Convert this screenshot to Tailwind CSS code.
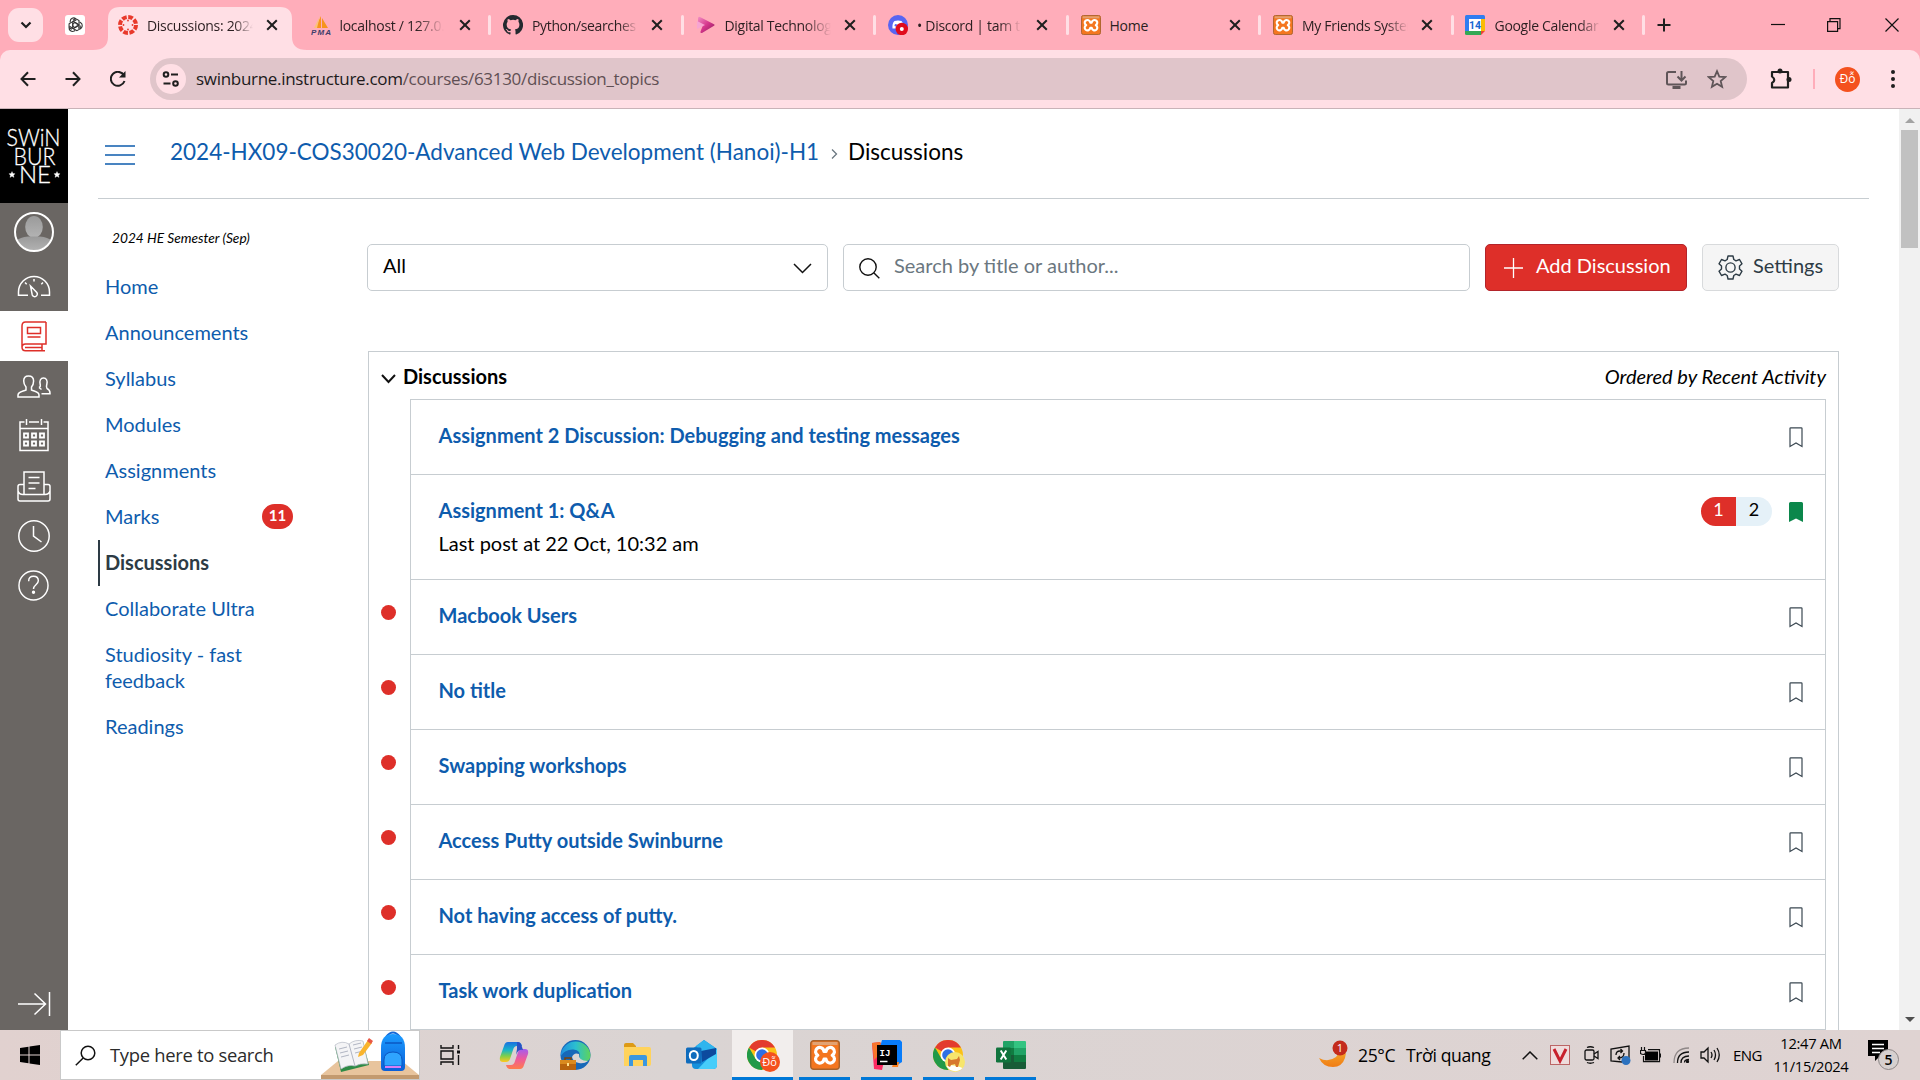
<!DOCTYPE html>
<html lang="en">
<head>
<meta charset="utf-8">
<title>Discussions</title>
<script src="https://cdn.jsdelivr.net/npm/@tailwindcss/browser@4"></script>
</head>
<body class="h-[1080px] w-[1920px] overflow-hidden bg-white font-['Lato',sans-serif] text-black">
<svg class="absolute h-0 w-0">
  <defs>
    <linearGradient id="g-cop1" x1="0" y1="0" x2="0" y2="1"><stop offset="0" stop-color="#1b6fe0"/><stop offset=".4" stop-color="#18b5c9"/><stop offset=".7" stop-color="#7fcf4a"/><stop offset="1" stop-color="#ffc81e"/></linearGradient>
    <linearGradient id="g-cop2" x1="0" y1="0" x2="0" y2="1"><stop offset="0" stop-color="#a45cf0"/><stop offset=".5" stop-color="#ee5a9c"/><stop offset="1" stop-color="#ff7d4a"/></linearGradient>
    <linearGradient id="g-edge" x1="0" y1="0" x2="1" y2="0"><stop offset="0" stop-color="#1f8fe0"/><stop offset=".5" stop-color="#2bbfd0"/><stop offset="1" stop-color="#5ed45a"/></linearGradient>
    <linearGradient id="g-moon" x1="0" y1="0" x2="0" y2="1"><stop offset="0" stop-color="#f7b733"/><stop offset="1" stop-color="#f07c14"/></linearGradient>
    <linearGradient id="g-bag" x1="0" y1="0" x2="0" y2="1"><stop offset="0" stop-color="#1b9bff"/><stop offset="1" stop-color="#0a5fd8"/></linearGradient>
    <linearGradient id="g-head" x1="0" y1="0" x2="0" y2="1"><stop offset="0" stop-color="#9a9a9a"/><stop offset="1" stop-color="#b4b4b4"/></linearGradient>
    <linearGradient id="g-stream" x1="0" y1="0" x2="1" y2="1"><stop offset="0" stop-color="#f28fc4"/><stop offset=".5" stop-color="#d6368c"/><stop offset="1" stop-color="#8b1a5c"/></linearGradient>
  </defs>
  <symbol id="x" viewBox="0 0 12 12"><path d="M1.2 1.2 10.8 10.8M10.8 1.2 1.2 10.8" stroke="#1f1f1f" stroke-width="2" fill="none"/></symbol>
  <symbol id="xampp" viewBox="0 0 30 30"><rect x=".7" y=".7" width="28.6" height="28.6" rx="3" fill="#f4761f" stroke="#a8622b" stroke-width="1.4"/><path d="M2.500 2h25v3h-25z" fill="#e2a272"/><path d="M7 8.500C9.500 6.500 13.500 7.500 14 11.500h2C16.500 7.500 20.500 6.500 23 8.500c2.300 2 1.800 5-.8 6.800 2.600 1.800 3.100 4.800.8 6.800-2.500 2-6.500 1-7-3h-2c-.5 4-4.500 5-7 3-2.300-2-1.800-5 .8-6.800C5.200 13.500 4.700 10.500 7 8.500z" fill="none" stroke="#fff" stroke-width="3.200" stroke-linejoin="round"/></symbol>
  <symbol id="bm" viewBox="0 0 14 21"><path d="M1 1.500Q1 .8 1.700 .8H12.300Q13 .8 13 1.500V19.400L7 16 1 19.400Z" fill="none" stroke="#3b4852" stroke-width="1.200"/></symbol>
  <symbol id="chrome" viewBox="0 0 30 30"><circle cx="15" cy="15" r="15" fill="#fbc116"/><path d="M15 15 2 7.500A15 15 0 0 1 28 7.500H15z" fill="#e33b2e"/><path d="M2 7.500A15 15 0 0 0 15 30L21.500 18.700 15 15 8.500 18.700z" fill="#219a48"/><circle cx="15" cy="15" r="7.500" fill="#fff"/><circle cx="15" cy="15" r="5.800" fill="#2f6fe4"/></symbol>
</svg>

<div class="flex h-full flex-col">
  <!-- Tab strip -->
  <header class="flex h-[50px] shrink-0 bg-[#ffadba] font-['Open_Sans',sans-serif] text-[14px] text-[#2b1f21]">
    <div class="flex w-[103px] shrink-0 items-start pl-2 pt-2">
      <div class="flex h-[34px] w-[35px] items-center justify-center rounded-[11px] bg-[#ffdfe5]"><svg class="h-[8px] w-[12px]" viewBox="0 0 12 8"><path d="M1.500 1.500 6 6 10.500 1.500" fill="none" stroke="#1f1f1f" stroke-width="2.200"/></svg></div>
      <svg class="ml-[22px] mt-[7px] h-5 w-5" viewBox="0 0 20 20"><rect width="20" height="20" rx="3" fill="#fff"/><g fill="none" stroke="#333" stroke-width="1.100"><path id="p" d="M5.200 7.500V6.200C5.300 3.500 8.500 2 10.800 3.600L14 5.500v4.800L10 12.600 7.800 11.300V6.800l3.600-2M10.800 3.600 7.800 5.200"/><use href="#p" transform="rotate(120 10 10)"/><use href="#p" transform="rotate(240 10 10)"/></g></svg>
    </div>
    <div class="relative w-[192.5px] shrink-0">
      <svg class="absolute top-[7px] -left-[10px] h-[43px] w-[214px]" viewBox="0 0 214 43"><path d="M0 43Q15 43 15 30V12Q15 0 27 0H187Q199 0 199 12V30Q199 43 214 43Z" fill="#ffdfe5"/></svg>
      <div class="relative flex h-[50px] items-center pl-[15px]">
        <svg class="h-5 w-5" viewBox="0 0 20 20"><circle cx="10" cy="10" r="8" fill="none" stroke="#e8392b" stroke-width="4" stroke-dasharray="4.700 1.583"/><g fill="#e8392b"><circle cx="10" cy="5.500" r=".9"/><circle cx="10" cy="14.500" r=".9"/><circle cx="5.500" cy="10" r=".9"/><circle cx="14.500" cy="10" r=".9"/></g></svg>
        <span class="ml-[9px] w-[106px] overflow-hidden whitespace-nowrap tracking-[-0.3px] [mask-image:linear-gradient(to_right,black_82%,transparent)]">Discussions: 2024</span>
        <svg class="ml-[13px] h-3 w-3"><use href="#x"/></svg>
      </div>
    </div>
    <div class="flex w-[192.5px] shrink-0 items-center pl-[15px]">
      <svg class="h-5 w-5" viewBox="0 0 20 20"><path d="M10 1 4 13h6zM11 3l6 10h-6z" fill="#f7941d"/><path d="M9 1 6 13H3z" fill="#fbc27a"/><text x="0" y="19.500" font-family="Liberation Sans" font-weight="bold" font-style="italic" font-size="8" textLength="20" fill="#41406b">PMA</text></svg>
      <span class="ml-[9px] w-[106px] overflow-hidden whitespace-nowrap tracking-[-0.3px] [mask-image:linear-gradient(to_right,black_72%,transparent_98%)]">localhost / 127.0.0.1</span>
      <svg class="ml-[13px] h-3 w-3"><use href="#x"/></svg>
    </div>
    <div class="flex w-[192.5px] shrink-0 items-center"><i class="h-5 w-[3px] rounded bg-[#ffdfe5]"></i>
      <svg class="ml-[12px] h-5 w-5" viewBox="0 0 16 16"><path fill="#24292f" d="M8 0a8 8 0 0 0-2.530 15.590c.4.070.550-.170.550-.380v-1.490c-2.010.370-2.530-.490-2.690-.940-.090-.230-.480-.940-.820-1.130-.280-.150-.680-.520-.010-.530.630-.010 1.080.580 1.230.820.720 1.210 1.870.870 2.330.660.070-.520.280-.870.510-1.070-1.780-.2-3.640-.890-3.640-3.950 0-.870.310-1.590.820-2.150-.080-.2-.360-1.020.080-2.120 0 0 .670-.210 2.200.820a7.400 7.400 0 0 1 4 0c1.530-1.040 2.200-.820 2.200-.820.440 1.100.160 1.920.080 2.120.510.560.820 1.270.820 2.150 0 3.070-1.870 3.750-3.650 3.950.290.250.540.730.540 1.480v2.200c0 .210.150.460.550.380A8 8 0 0 0 8 0"/></svg>
      <span class="ml-[9px] w-[106px] overflow-hidden whitespace-nowrap tracking-[-0.35px] [mask-image:linear-gradient(to_right,black_82%,transparent)]">Python/searches</span>
      <svg class="ml-[13px] h-3 w-3"><use href="#x"/></svg>
    </div>
    <div class="flex w-[192.5px] shrink-0 items-center"><i class="h-5 w-[3px] rounded bg-[#ffdfe5]"></i>
      <svg class="ml-[12px] h-5 w-5" viewBox="0 0 20 20"><path d="M2 3.500Q2 1 4.500 2.300L18 9.200q1.500.8 0 1.600L6 18q-2 .5-1.500-1.500L7 10 2 7z" fill="url(#g-stream)"/><path d="M1 6l8 4-8 4z" fill="#f7a5d2"/></svg>
      <span class="ml-[9px] w-[106px] overflow-hidden whitespace-nowrap tracking-[-0.3px] [mask-image:linear-gradient(to_right,black_75%,transparent)]">Digital Technology</span>
      <svg class="ml-[13px] h-3 w-3"><use href="#x"/></svg>
    </div>
    <div class="flex w-[192.5px] shrink-0 items-center"><i class="h-5 w-[3px] rounded bg-[#ffdfe5]"></i>
      <svg class="ml-[12px] h-5 w-5" viewBox="0 0 20 20"><circle cx="10" cy="10" r="10" fill="#5865f2"/><path d="M4.500 13.500Q4 8 6.500 6q3.500-1 7 0Q15.500 8 15.500 13L12 13.500H8z" fill="#fff"/><circle cx="7.800" cy="10.300" r="1.200" fill="#5865f2"/><circle cx="13.800" cy="14" r="6.200" fill="#e00b1c"/><circle cx="13.800" cy="14" r="2" fill="#fff"/></svg>
      <span class="ml-[9px] w-[106px] overflow-hidden whitespace-nowrap tracking-[-0.3px] [mask-image:linear-gradient(to_right,black_78%,transparent_98%)]">• Discord | tam thoi</span>
      <svg class="ml-[13px] h-3 w-3"><use href="#x"/></svg>
    </div>
    <div class="flex w-[192.5px] shrink-0 items-center"><i class="h-5 w-[3px] rounded bg-[#ffdfe5]"></i>
      <svg class="ml-[12px] h-5 w-5"><use href="#xampp"/></svg>
      <span class="ml-[9px] w-[106px] tracking-[-0.2px]">Home</span>
      <svg class="ml-[13px] h-3 w-3"><use href="#x"/></svg>
    </div>
    <div class="flex w-[192.5px] shrink-0 items-center"><i class="h-5 w-[3px] rounded bg-[#ffdfe5]"></i>
      <svg class="ml-[12px] h-5 w-5"><use href="#xampp"/></svg>
      <span class="ml-[9px] w-[106px] overflow-hidden whitespace-nowrap tracking-[-0.3px] [mask-image:linear-gradient(to_right,black_80%,transparent)]">My Friends System</span>
      <svg class="ml-[13px] h-3 w-3"><use href="#x"/></svg>
    </div>
    <div class="flex w-[191px] shrink-0 items-center"><i class="h-5 w-[3px] rounded bg-[#ffdfe5]"></i>
      <svg class="ml-[11px] h-5 w-5" viewBox="0 0 20 20"><path d="M0 1.500Q0 0 1.500 0H18.500Q20 0 20 1.500V16H0z" fill="#2f7df0"/><path d="M16 4h4v12h-4z" fill="#fbbc04"/><path d="M0 16h16v4H1.500Q0 20 0 18.500z" fill="#34a853"/><path d="M16 16h4l-4 4z" fill="#ea4335"/><path d="M4 4h12v12H4z" fill="#fff"/><text x="10" y="14" text-anchor="middle" font-family="Roboto" font-weight="bold" font-size="10.500" fill="#1967d2">14</text></svg>
      <span class="ml-[10px] w-[106px] overflow-hidden whitespace-nowrap tracking-[-0.3px] [mask-image:linear-gradient(to_right,black_80%,transparent)]">Google Calendar</span>
      <svg class="ml-[12px] h-3 w-3"><use href="#x"/></svg>
    </div>
    <div class="flex flex-1 items-center"><i class="h-5 w-[3px] rounded bg-[#ffdfe5]"></i>
      <svg class="ml-[12px] h-[14px] w-[14px]" viewBox="0 0 14 14"><path d="M7 .5v13M.5 7h13" stroke="#1f1f1f" stroke-width="2"/></svg>
      <svg class="ml-[100px] h-[14px] w-[14px]" viewBox="0 0 14 14"><path d="M0 6.500h14" stroke="#111" stroke-width="1.200"/></svg>
      <svg class="ml-[42px] h-[14px] w-[14px]" viewBox="0 0 14 14"><path d="M.6 3.600h10v9.800h-10zM3 3.500V.6h10v10h-2.400" fill="none" stroke="#111" stroke-width="1.200"/></svg>
      <svg class="ml-[44px] h-[14px] w-[14px]" viewBox="0 0 14 14"><path d="M.5.5l13 13M13.500.5l-13 13" stroke="#111" stroke-width="1.200"/></svg>
    </div>
  </header>

  <!-- Toolbar -->
  <div class="h-[59px] shrink-0 bg-[#ffadba]">
    <div class="flex h-full items-center rounded-t-[10px] border-b border-[#c9b3b8] bg-[#ffdfe5]">
      <svg class="ml-[20px] h-4 w-4" viewBox="0 0 16 16"><path d="M15.500 8H1.500M8 1.200 1.500 8 8 14.800" fill="none" stroke="#1f1f1f" stroke-width="2"/></svg>
      <svg class="ml-[29px] h-4 w-4" viewBox="0 0 16 16"><path d="M.5 8h14M8 1.200 14.500 8 8 14.800" fill="none" stroke="#1f1f1f" stroke-width="2"/></svg>
      <svg class="ml-[29px] h-4 w-4" viewBox="0 0 16 16"><path d="M14 4.500A7 7 0 1 0 14.500 10" fill="none" stroke="#1f1f1f" stroke-width="2"/><path d="M15.500 0v6.500H9z" fill="#1f1f1f"/></svg>
      <div class="ml-[24px] flex h-[42px] w-[1597px] items-center rounded-full bg-[#e0c5ca] pl-[6px] font-['Open_Sans',sans-serif] text-[17px]">
        <span class="flex h-[30px] w-[30px] items-center justify-center rounded-full bg-[#ffdfe5]"><svg class="h-[16px] w-[18px]" viewBox="0 0 18 16"><g fill="none" stroke="#1f1f1f" stroke-width="2"><circle cx="4" cy="3.500" r="2.300"/><circle cx="13.500" cy="12.500" r="2.300"/><path d="M9 3.500h7M1.500 12.500h7"/></g></svg></span>
        <span class="ml-[10px] whitespace-nowrap text-[#5f4f53] tracking-[-0.3px]"><span class="text-[#201a1b]">swinburne.instructure.com</span>/courses/63130/discussion_topics</span>
        <svg class="ml-auto h-[21px] w-[21px]" viewBox="0 0 21 21"><g fill="none" stroke="#5f5558" stroke-width="2"><path d="M10 3H2.500Q1 3 1 4.500V14Q1 15.500 2.500 15.500h16Q20 15.500 20 14v-2.500M15.500 2v9M11.500 7.500l4 4 4-4"/><path d="M6.500 18.500h8" stroke-width="3"/></g></svg>
        <svg class="mr-[20px] ml-[20px] h-[20px] w-[20px]" viewBox="0 0 20 20"><path d="M10 2.200l2.300 5.400 5.900.5-4.500 3.900 1.400 5.800L10 14.700l-5.100 3.100 1.400-5.800L1.800 8.100l5.900-.5z" fill="none" stroke="#5f5558" stroke-width="1.800"/></svg>
      </div>
      <svg class="ml-[23px] h-[22px] w-[22px]" viewBox="0 0 22 22"><path d="M2 4h16v15.500H2v-4.500q4.500-3 0-6.500z" fill="none" stroke="#1f1f1f" stroke-width="2.200" stroke-linejoin="round"/><circle cx="10" cy="3" r="2.500" fill="#1f1f1f"/><circle cx="19" cy="11.500" r="2.500" fill="#1f1f1f"/></svg>
      <i class="ml-[21px] h-5 w-[2px] bg-[#ffadba]"></i>
      <span class="ml-[20px] flex h-[25px] w-[25px] items-center justify-center rounded-full bg-[#f4511e] font-['Open_Sans',sans-serif] text-[12px] text-white">Đỗ</span>
      <svg class="ml-[30px] h-[20px] w-[6px]" viewBox="0 0 6 20" fill="#1f1f1f"><circle cx="3" cy="3" r="2"/><circle cx="3" cy="10" r="2"/><circle cx="3" cy="17" r="2"/></svg>
    </div>
  </div>

  <!-- Page -->
  <main class="flex h-[921px] shrink-0 overflow-hidden">
    <nav class="flex w-[68px] shrink-0 flex-col items-center bg-[#6a6663]">
      <svg class="h-[94px] w-[68px] shrink-0 bg-black" viewBox="0 0 68 94" fill="#fff" stroke="#fff" stroke-width=".3" font-family="Lato" font-weight="300" font-size="24"><text x="6.500" y="36.500" textLength="54" lengthAdjust="spacingAndGlyphs">SWiN</text><text x="13.500" y="55.500" textLength="42" lengthAdjust="spacingAndGlyphs">BUR</text><text x="19" y="74" textLength="32" lengthAdjust="spacingAndGlyphs">NE</text><path id="st" d="M12 62.500l.9 2 2.200.2-1.600 1.500.5 2.200-2-1.200-2 1.200.5-2.200-1.600-1.500 2.200-.2z"/><use href="#st" x="45"/></svg>
      <svg class="mt-[9px] h-[40px] w-[40px] shrink-0" viewBox="0 0 40 40"><clipPath id="av"><circle cx="20" cy="20" r="18.500"/></clipPath><g clip-path="url(#av)" fill="url(#g-head)"><ellipse cx="20" cy="15" rx="8.800" ry="11"/><path d="M2 40V29q4-4 12-4.500h12q8 .5 12 4.500v11z"/></g><circle cx="20" cy="20" r="19" fill="none" stroke="#fff" stroke-width="2"/></svg>
      <svg class="mt-[23px] h-[23px] w-[34px] shrink-0" viewBox="0 0 34 23" fill="none" stroke="#fff" stroke-width="1.500"><path d="M11 20.300H1.500V17A15.500 15.500 0 0 1 32.500 17v3.300H24"/><path d="M13.500 11l6.300 6.500a2.600 2.600 0 1 1-4.600 2.200zM17 4v2.500M8 7.500l1.700 1.700M26 7.500l-1.700 1.700"/></svg>
      <div class="mt-[13px] flex h-[50px] w-full shrink-0 items-center justify-center bg-white"><svg class="h-[31px] w-[26px]" viewBox="0 0 26 31" fill="none" stroke="#de2f29" stroke-width="1.500"><path d="M25 1H4.500Q1 1 1 5v21q0 3.800 3.500 3.800H24M25 1v22H4.500Q1 23 1 26.500M4 26.500h17M21 23v6.500"/><path d="M6.500 6.500h13v6h-13zM6.500 16h13"/></svg></div>
      <svg class="mt-[14px] h-[23px] w-[34px] shrink-0" viewBox="0 0 34 23" fill="none" stroke="#fff" stroke-width="1.500"><path d="M11.500 1c-3 0-4.800 2-4.800 5 0 3 1 4.500 2.300 6v3c-4 1.500-8 1.500-8 5V22h21v-2c0-3.500-4-3.500-7.500-5v-3c1.300-1.500 2.100-3 2.100-6 0-3-2-5-5.100-5z"/><path d="M22 12.500c2-1 1.500-1.500 1.200-3-1-4 .5-6.500 3.300-6.500s4.300 2.500 3.300 6.500c-.3 1.500-.8 2 .2 4 2 1 3 1.500 3 4.500v.8h-8.500M22 12.500l2.500 2"/></svg>
      <svg class="mt-[20px] h-[34px] w-[30px] shrink-0" viewBox="0 0 30 34" fill="none" stroke="#fff" stroke-width="1.500"><path d="M5.500 4H1v28.500h28V4h-4.500M10 4h10M1 10.500h28M7.500 1v6M22.500 1v6"/><path stroke-width="1.800" d="M5 15.500h4v4H5zM13 15.500h4v4h-4zM21 15.500h4v4h-4zM5 23.500h4v4H5zM13 23.500h4v4h-4zM21 23.500h4v4h-4z"/></svg>
      <svg class="mt-[19px] h-[31px] w-[34px] shrink-0" viewBox="0 0 34 31" fill="none" stroke="#fff" stroke-width="1.500"><path d="M7 23.500V1h20v22.500M7 13.500H3q-2 0-2 2V28q0 2 2 2h28q2 0 2-2V15.500q0-2-2-2h-4M1 20q1 3.500 5 3.500h22q4 0 5-3.500M11.500 6.500h11M11.500 12h11M11.500 17.500h7"/></svg>
      <svg class="mt-[18px] h-[32px] w-[32px] shrink-0" viewBox="1 1 32 32" fill="none" stroke="#fff" stroke-width="1.500"><circle cx="17" cy="17" r="15.200"/><path d="M16.500 7v10l8 6"/></svg>
      <svg class="mt-[18px] mr-[2px] h-[31px] w-[31px] shrink-0" viewBox="0 0 32 32" fill="none" stroke="#fff" stroke-width="1.500"><circle cx="16" cy="16" r="15"/><path d="M11 11.500C11 8.500 13 6.500 16 6.500s5 2 5 4.700c0 3.800-5 4.300-5 8.300"/><circle cx="16" cy="23" r="1" fill="#fff"/></svg>
      <svg class="mt-auto mb-[13px] h-[26px] w-[34px] shrink-0" viewBox="0 0 34 26" fill="none" stroke="#fff" stroke-width="1.500"><path d="M1 13h27M17.500 2.500 28.500 13 17.500 23.500M32.500 1v24"/></svg>
    </nav>

    <div class="flex w-[1831px] shrink-0 flex-col pl-[30px]">
      <div class="flex h-[90px] w-[1771px] shrink-0 items-center border-b border-[#c7cdd1] pb-[3px] text-[22.5px]">
        <svg class="ml-[7px] mt-[6px] h-[22px] w-[30px]" viewBox="0 0 30 22"><path d="M0 2h30M0 11h30M0 20h30" stroke="#0e5cad" stroke-width="1.700"/></svg>
        <span class="ml-[35px] w-[649px] whitespace-nowrap text-[#0e5cad]">2024-HX09-COS30020-Advanced Web Development (Hanoi)-H1</span>
        <svg class="ml-[12px] mt-[4px] h-[10px] w-[7px]" viewBox="0 0 7 10"><path d="M1 .5 5.500 5 1 9.500" fill="none" stroke="#6b7780" stroke-width="1.300"/></svg>
        <span class="ml-[10px]">Discussions</span>
      </div>
      <div class="flex">
        <aside class="w-[270px] shrink-0 pt-[26px] text-[20px] leading-[26px] text-[#0e5cad]">
          <p class="mb-[13px] pl-[14px] text-[13.7px] text-black italic">2024 HE Semester (Sep)</p>
          <p class="px-[7px] pt-[9px] pb-[11px]">Home</p>
          <p class="px-[7px] pt-[9px] pb-[11px]">Announcements</p>
          <p class="px-[7px] pt-[9px] pb-[11px]">Syllabus</p>
          <p class="px-[7px] pt-[9px] pb-[11px]">Modules</p>
          <p class="px-[7px] pt-[9px] pb-[11px]">Assignments</p>
          <div class="flex w-[195px] items-start justify-between pt-[9px] pb-[11px] pl-[7px]">Marks<span class="mt-[1px] h-[25px] w-[31px] rounded-full bg-[#de2f29] text-center text-[15px] leading-[23px] font-bold text-white">11</span></div>
          <p class="border-l-2 border-[#2d3b45] px-[5px] pt-[9px] pb-[11px] font-bold text-[#2d3b45]">Discussions</p>
          <p class="px-[7px] pt-[9px] pb-[11px]">Collaborate Ultra</p>
          <p class="px-[7px] pt-[9px] pb-[11px]">Studiosity - fast<br>feedback</p>
          <p class="px-[7px] pt-[9px] pb-[11px]">Readings</p>
        </aside>

        <section class="w-[1471px] shrink-0 pt-[45px] text-[20px]">
          <div class="-ml-px flex h-[47px] w-[1472px] gap-[15px] leading-[42px]">
            <div class="flex w-[461px] justify-between rounded-[5px] border border-[#c7cdd1] pr-[15px] pl-[15px]"><span class="-mt-px">All</span><svg class="mt-[18px] h-[11px] w-[19px]" viewBox="0 0 19 11"><path d="M1 1l8.500 8.500L18 1" fill="none" stroke="#111" stroke-width="1.500"/></svg></div>
            <div class="flex w-[627px] rounded-[5px] border border-[#c7cdd1] pl-[15px] text-[#6b7780]"><svg class="mt-[13px] mr-[14px] h-[21px] w-[21px]" viewBox="0 0 21 21"><circle cx="9" cy="9" r="8.200" fill="none" stroke="#111" stroke-width="1.400"/><path d="M15 15l5.300 5.300" stroke="#111" stroke-width="1.400"/></svg><span class="-mt-px">Search by title or author...</span></div>
            <div class="flex w-[202px] rounded-[5px] border border-[#b3242a] bg-[#de2f29] pl-[18px] text-white"><svg class="mt-[13px] mr-[13px] h-[20px] w-[19px]" viewBox="0 0 19 20"><path d="M9.500 0v20M0 10h19" stroke="#fff" stroke-width="1.300"/></svg><span class="-mt-px">Add Discussion</span></div>
            <div class="flex w-[137px] rounded-[5px] border border-[#d8dadc] bg-[#f5f5f5] pl-[15px] text-[#2d3b45]"><svg class="mt-[10px] mr-[10px] h-[25px] w-[25px]" viewBox="0 0 25 25" fill="none" stroke="#2d3b45" stroke-width="1.400"><circle cx="12.500" cy="12.500" r="4.600"/><path d="M10 1h5l.8 3.500 2.200 1.300 3.500-1.300 2.500 4.300L21.500 11v3l2.500 2.200-2.500 4.300-3.500-1.300-2.200 1.300L15 24h-5l-.8-3.500L7 19.200l-3.500 1.300L1 16.200 3.500 14v-3L1 8.800l2.500-4.300L7 5.800l2.200-1.300z" stroke-linejoin="round"/></svg><span class="-mt-px">Settings</span></div>
          </div>

          <div class="mt-[60px] h-[700px] border border-[#c7cdd1]">
            <div class="flex h-[47px] items-center pt-[1px] pr-[12px] pl-[12px] font-bold"><svg class="mt-[5px] mr-[7px] h-[10px] w-[15px]" viewBox="0 0 15 10"><path d="M1 1l6.500 7L14 1" fill="none" stroke="#111" stroke-width="2"/></svg>Discussions<span class="ml-auto font-normal italic">Ordered by Recent Activity</span></div>
            <ul class="mr-[12px] ml-[12px] text-[#0e5cad]">
              <li class="flex h-[75px]"><span class="w-[29px]"></span><div class="flex flex-1 items-start justify-between border border-b-0 border-[#c7cdd1] pt-[23px] pr-[22px] pl-[27.5px] font-bold leading-[24px]">Assignment 2 Discussion: Debugging and testing messages<svg class="mt-[4px] h-[21px] w-[14px]"><use href="#bm"/></svg></div></li>
              <li class="flex h-[105px]"><span class="w-[29px]"></span><div class="flex flex-1 items-start border border-b-0 border-[#c7cdd1] pt-[23px] pr-[22px] pl-[27.5px] leading-[24px]"><div><p class="font-bold">Assignment 1: Q&amp;A</p><p class="mt-[9px] text-black">Last post at 22 Oct, 10:32 am</p></div>
                <div class="-mt-[1px] ml-auto flex h-[29px] w-[71px] overflow-hidden rounded-full text-center text-[18px] leading-[25px]"><span class="w-[35px] bg-[#de2f29] text-white">1</span><span class="w-[36px] bg-[#e5f1f8] text-black">2</span></div>
                <svg class="mt-[4px] ml-[17px] h-[20px] w-[14px]" viewBox="0 0 14 20"><path d="M0 1.500Q0 0 1.500 0H12.500Q14 0 14 1.500V20L7 16.500 0 20z" fill="#0b874b"/></svg></div></li>
              <li class="flex h-[75px]"><i class="mt-[26px] mr-[14px] h-[15px] w-[15px] rounded-full bg-[#de2f29]"></i><div class="flex flex-1 items-start justify-between border border-b-0 border-[#c7cdd1] pt-[23px] pr-[22px] pl-[27.5px] font-bold leading-[24px]">Macbook Users<svg class="mt-[4px] h-[21px] w-[14px]"><use href="#bm"/></svg></div></li>
              <li class="flex h-[75px]"><i class="mt-[26px] mr-[14px] h-[15px] w-[15px] rounded-full bg-[#de2f29]"></i><div class="flex flex-1 items-start justify-between border border-b-0 border-[#c7cdd1] pt-[23px] pr-[22px] pl-[27.5px] font-bold leading-[24px]">No title<svg class="mt-[4px] h-[21px] w-[14px]"><use href="#bm"/></svg></div></li>
              <li class="flex h-[75px]"><i class="mt-[26px] mr-[14px] h-[15px] w-[15px] rounded-full bg-[#de2f29]"></i><div class="flex flex-1 items-start justify-between border border-b-0 border-[#c7cdd1] pt-[23px] pr-[22px] pl-[27.5px] font-bold leading-[24px]">Swapping workshops<svg class="mt-[4px] h-[21px] w-[14px]"><use href="#bm"/></svg></div></li>
              <li class="flex h-[75px]"><i class="mt-[26px] mr-[14px] h-[15px] w-[15px] rounded-full bg-[#de2f29]"></i><div class="flex flex-1 items-start justify-between border border-b-0 border-[#c7cdd1] pt-[23px] pr-[22px] pl-[27.5px] font-bold leading-[24px]">Access Putty outside Swinburne<svg class="mt-[4px] h-[21px] w-[14px]"><use href="#bm"/></svg></div></li>
              <li class="flex h-[75px]"><i class="mt-[26px] mr-[14px] h-[15px] w-[15px] rounded-full bg-[#de2f29]"></i><div class="flex flex-1 items-start justify-between border border-b-0 border-[#c7cdd1] pt-[23px] pr-[22px] pl-[27.5px] font-bold leading-[24px]">Not having access of putty.<svg class="mt-[4px] h-[21px] w-[14px]"><use href="#bm"/></svg></div></li>
              <li class="flex h-[76px]"><i class="mt-[26px] mr-[14px] h-[15px] w-[15px] rounded-full bg-[#de2f29]"></i><div class="flex flex-1 items-start justify-between border border-[#c7cdd1] pt-[23px] pr-[22px] pl-[27.5px] font-bold leading-[24px]">Task work duplication<svg class="mt-[4px] h-[21px] w-[14px]"><use href="#bm"/></svg></div></li>
            </ul>
          </div>
        </section>
      </div>
    </div>

    <div class="flex w-[21px] shrink-0 flex-col items-center bg-[#f1f1f1]">
      <svg class="mt-[9px] h-[5px] w-[10px] shrink-0" viewBox="0 0 10 5"><path d="M0 5 5 0l5 5z" fill="#a3a3a3"/></svg>
      <div class="mt-[7px] h-[118px] w-[17px] bg-[#c1c1c1]"></div>
      <svg class="mt-auto mb-[8px] h-[5px] w-[10px] shrink-0" viewBox="0 0 10 5"><path d="M0 0h10L5 5z" fill="#505050"/></svg>
    </div>
  </main>

  <!-- Taskbar -->
  <footer class="flex h-[50px] shrink-0 bg-linear-to-r from-[#e1d1cf] via-[#dad4d3] via-35% to-[#dfd3d2] font-['Open_Sans',sans-serif] text-black">
    <div class="flex w-[60px] items-center justify-center"><svg class="h-5 w-5" viewBox="0 0 20 20"><path d="M0 3l8.500-1.200V9.500H0zM9.500 1.600 20 0v9.500H9.500zM0 10.500h8.500v7.700L0 17zM9.500 10.500H20V20L9.500 18.400z"/></svg></div>
    <div class="flex w-[360px] items-center border border-[#c9c9c9] bg-white pl-[14px] text-[18.4px]">
      <svg class="h-[21px] w-[21px]" viewBox="0 0 21 21"><circle cx="13" cy="8" r="6.800" fill="none" stroke="#111" stroke-width="1.500"/><path d="M8.200 13 .8 20.300" stroke="#111" stroke-width="1.500"/></svg>
      <span class="ml-[14px] w-[211px] whitespace-nowrap tracking-[-0.3px] text-[#2b2b2b]">Type here to search</span>
      <svg class="h-[48px] w-[98px] shrink-0" viewBox="0 0 98 48"><path d="M0 44 17 30H81L98 44z" fill="#e8c49d"/><path d="M0 44h98v4H0z" fill="#c39a6f"/><path d="M14 16 42 11 48 34 20 41z" fill="#2e8b46"/><path d="M14 14q7-5 14-1 6-5 14-3l5 23q-8-1-13 2-7-2-14 3z" fill="#f4f4f6" stroke="#b5b9c4" stroke-width=".7"/><path d="M28 13l6 22M18 18l8-2M19 22l8-2M20 26l8-2M32 14l8-2M33 18l8-2M34 22l8-2" stroke="#a9afbd" stroke-width=".9"/><path d="M38 22 47 9l4 3-9 12-5 2z" fill="#f9b42d"/><path d="M46 10l2-3 4 3-2 3z" fill="#e85845"/><path d="M65 6q7-9 14 0" fill="none" stroke="#1467d6" stroke-width="2"/><path d="M60 36V17Q60 3 72 3T84 17v19q0 4-4 4H64q-4 0-4-4z" fill="url(#g-bag)"/><path d="M64 12h17" stroke="#0b57c2" stroke-width="1.500"/><path d="M63 35v-6q0-8 9-8t9 8v6z" fill="#2fa4ff" stroke="#0a55c0"/><path d="M64 35h16v2H64z" fill="#d77df5"/></svg>
    </div>
    <div class="flex w-[60px] items-center justify-center pl-px"><svg class="h-[20px] w-[21px]" viewBox="0 0 21 20" fill="none" stroke="#111" stroke-width="1.400"><path d="M1 0v3h12V0M1 20v-3h12v3M1 6h12v8H1zM18.500 0v4M18.500 10v10"/><path d="M17 5.500h3v3h-3z" fill="#111" stroke="none"/></svg></div>
    <div class="flex w-[67px] items-center justify-center"><svg class="h-[29px] w-[30px]" viewBox="0 0 30 29"><path d="M9 1h10q3 0 4 4l-5 0q-3 0-4 4l-3 9q-1 3-4 3H4q-4 0-3-5L5 5q1-4 4-4z" fill="url(#g-cop1)"/><path d="M21 28H11q-3 0-4-4h5q3 0 4-4l3-9q1-3 4-3h3q4 0 3 5l-4 11q-1 4-4 4z" fill="url(#g-cop2)"/><path d="M18 1q4 0 5 5l1 3q-5-1-7 5l1-6z" fill="#2b51c4"/></svg></div>
    <div class="flex w-[57px] items-center justify-center"><svg class="h-[30px] w-[31px]" viewBox="0 0 31 30"><circle cx="15.500" cy="15" r="15" fill="#1668b8"/><path d="M.8 14A15 15 0 0 1 30.500 15q0 7-7 7-6 0-4-4 2-8-6-8.500Q5 9 .8 16z" fill="url(#g-edge)"/><path d="M12 17q2-5 7-3-1 7 9 7-4 3-9 2-6-1-7-6z" fill="#d9d4d3"/><path d="M0 20h16v10H0z" fill="#b8640d"/><path d="M0 20h16v4H0z" fill="#d98a1e"/><path d="M5 20v-2h6v2" fill="none" stroke="#7c430a" stroke-width="1.500"/><path d="M7 23h2v3H7z" fill="#ffe08a"/></svg></div>
    <div class="flex w-[67px] items-center justify-center"><svg class="h-[24px] w-[27px]" viewBox="0 0 27 24"><path d="M0 2Q0 0 2 0h7l3 3h0v4H0z" fill="#dd9a16"/><path d="M0 4h25q2 0 2 2v15q0 2-2 2H0z" fill="#ffd35c"/><path d="M5 23V14q0-2 2-2h14q2 0 2 2v9h-4v-6H9v6z" fill="#3b97e0"/></svg></div>
    <div class="flex w-[61px] items-center justify-center pr-px"><svg class="h-[32px] w-[31px]" viewBox="0 -2 31 32"><path d="M5 9 18 -1l13 9v16q0 4-4 4H10q-4 0-4-4z" fill="#1591dc"/><path d="M10 5l8-6 13 9-11 8z" fill="#2fb5ee"/><path d="M31 8v16q0 4-4 4H12z" fill="#46cdfa"/><path d="M15 10l15-3v6L16 21z" fill="#0c4a9e"/><rect y="6.500" width="15.500" height="16" rx="1.500" fill="#0f6cbd"/><ellipse cx="7.800" cy="14.500" rx="4" ry="4.600" fill="none" stroke="#fff" stroke-width="2"/></svg></div>
    <div class="flex w-[61px] flex-col items-center border-b-[3px] border-[#0078d7] bg-[#f2eeed]"><div class="relative mt-[10px] h-[32px] w-[32px]"><svg class="h-[30px] w-[30px]"><use href="#chrome"/></svg><span class="absolute top-[12px] left-[13px] flex h-5 w-5 items-center justify-center rounded-full bg-[#f4511e] text-[11px] text-white">Đỗ</span></div></div>
    <div class="ml-[6px] flex w-[51px] justify-center border-b-[3px] border-[#0078d7]"><svg class="mt-[10px] h-[30px] w-[30px]"><use href="#xampp"/></svg></div>
    <div class="ml-[11px] flex w-[51px] justify-center border-b-[3px] border-[#0078d7]"><svg class="mt-[10px] h-[30px] w-[30px]" viewBox="0 0 30 30"><path d="M0 3 8 2l6 10-4 18-8-1z" fill="#fc2b63"/><path d="M0 3l8-1 4 8-10 10z" fill="#f7762b"/><path d="M10 0h18l2 2v20l-8 5-14-20z" fill="#087cfa"/><path d="M22 22h5l-1 5h-6z" fill="#fc801d"/><path d="M5 5h20v20H5z"/><path d="M8 21.500h7.500" stroke="#fff" stroke-width="1.500"/><text x="7.500" y="15.500" font-family="Liberation Mono" font-weight="bold" font-size="9" fill="#fff">IJ</text></svg></div>
    <div class="ml-[11px] flex w-[51px] justify-center border-b-[3px] border-[#0078d7]"><svg class="mt-[10px] h-[32px] w-[32px]" viewBox="0 0 32 32"><use href="#chrome" width="30" height="30"/><circle cx="22" cy="22" r="10" fill="#f7e56c"/><path d="M13.500 26q8-2 16 2a10 10 0 0 1-16-2z" fill="#fff"/><path d="M15 18l3 2 6-1 2-3 1 4-2 7h-2l-1-3-4 1-1 2-2-1z" fill="#d7772f"/></svg></div>
    <div class="ml-[11px] flex w-[51px] justify-center border-b-[3px] border-[#0078d7]"><svg class="mt-[11px] h-[28px] w-[30px]" viewBox="0 0 30 28"><path d="M7 1q0-1 1-1h10v7H7z" fill="#21a366"/><path d="M18 0h11q1 0 1 1v6H18z" fill="#33c481"/><path d="M7 7h11v7H7z" fill="#107c41"/><path d="M18 7h12v7H18z" fill="#21a366"/><path d="M18 14h12v7H18z" fill="#107c41"/><path d="M7 14h11v7h12v6q0 1-1 1H8q-1 0-1-1z" fill="#185c37"/><rect y="6.500" width="15" height="15" rx="1.200" fill="#10743d"/><path d="M4.700 9.500l5.600 9M10.300 9.500l-5.600 9" stroke="#fff" stroke-width="2"/></svg></div>
    <div class="ml-auto flex w-[884px] shrink-0 items-center text-[17.6px]">
      <svg class="ml-[283px] h-[30px] w-[30px]" viewBox="0 0 30 30"><path d="M0 18q9 5 17-1 5-5 3-13 9 5 6 14-3 9-12 9Q4 27 0 18z" fill="url(#g-moon)"/><circle cx="21" cy="8" r="7.500" fill="#c42b1c"/><text x="21" y="12" font-size="11" text-anchor="middle" fill="#fff">1</text></svg>
      <span class="ml-[9px] w-[48px] whitespace-nowrap tracking-[-0.4px]">25°C</span><span class="w-[116px] whitespace-nowrap tracking-[-0.4px]">Trời quang</span>
      <svg class="h-[9px] w-[16px]" viewBox="0 0 16 9"><path d="M.7 8.300 8 1l7.300 7.300" fill="none" stroke="#111" stroke-width="1.500"/></svg>
      <svg class="ml-[12px] h-[20px] w-[20px]" viewBox="0 0 20 20"><rect x=".5" y=".5" width="19" height="19" fill="#efdcdc" stroke="#b66"/><path d="M4 4l6 12 6-12" fill="none" stroke="#c8202c" stroke-width="3"/></svg>
      <svg class="ml-[14px] h-[18px] w-[15px]" viewBox="0 0 15 18" fill="none" stroke="#111" stroke-width="1.300"><rect x="1" y="4" width="9" height="10" rx="1.500"/><path d="M10 8l4-2.500v7L10 10M3 1.500q3-1.500 7 0M3 16.500q3 1.500 7 0"/></svg>
      <svg class="ml-[11px] h-[20px] w-[21px]" viewBox="0 0 21 20" fill="none" stroke="#111" stroke-width="1.300"><path d="M12 17 1 16V4l18-3v12M6 10q0-4 4-4h2M10.500 4l2 2-2 2M14 8q0 5-5 5M10 11l-2 2 2 2"/><circle cx="16" cy="15.500" r="4.500" fill="#2c72bf" stroke="none"/></svg>
      <svg class="ml-[9px] h-[16px] w-[21px]" viewBox="0 0 21 16"><path d="M5 4.500h13v9H5z"/><path d="M8 2.700h11.500v12H3.500V9M1.500 0v4M4.500 0v4M.5 3.500h5v3q-2 2-5 0zM20.500 6.500v4" fill="none" stroke="#111" stroke-width="1.200"/></svg>
      <svg class="ml-[12px] h-[16px] w-[17px]" viewBox="0 0 17 16" fill="none" stroke="#111" stroke-width="1.300"><path d="M1 16Q1 1 16 1" stroke="#8f8888"/><path d="M4.500 16Q4.500 5 16 5M8 16q0-7 8-7M11.500 15.500q0-3 4.500-3"/><circle cx="14.500" cy="14.500" r="1" fill="#111"/></svg>
      <svg class="ml-[10px] h-[18px] w-[21px]" viewBox="0 0 21 18" fill="none" stroke="#111" stroke-width="1.300"><path d="M1 6h3l4-4v14l-4-4H1zM11 6q2 3 0 6M14 4q3 5 0 10M17 2q4.500 7 0 14"/></svg>
      <span class="ml-[12px] w-[40px] text-[15px] tracking-[-0.6px]">ENG</span>
      <div class="w-[76px] text-center text-[14.7px] leading-[23px] whitespace-nowrap tracking-[-0.3px]">12:47 AM<br>11/15/2024</div>
      <svg class="ml-[19px] h-[32px] w-[32px]" viewBox="0 0 32 32"><path d="M0 1h20v16h-8l-5 5v-5H0z"/><path d="M4 5.500h12M4 9.500h12M4 13.500h8" stroke="#fff" stroke-width="1.300"/><circle cx="20.500" cy="20.500" r="10" fill="#d6d0cf" stroke="#8c8686"/><text x="20.500" y="25.500" text-anchor="middle" font-size="14" font-weight="600">5</text></svg>
    </div>
  </footer>
</div>
</body>
</html>
